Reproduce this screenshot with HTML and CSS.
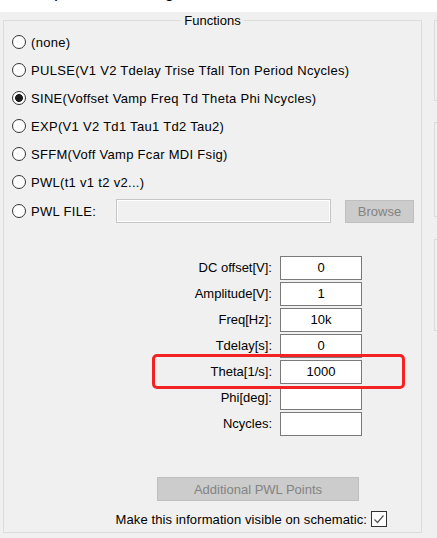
FILE: index.html
```html
<!DOCTYPE html>
<html lang="en">
<head>
    <meta charset="UTF-8">
    <meta name="viewport" content="width=device-width, initial-scale=1.0">
    <title>Independent Voltage Source</title>
    <link rel="stylesheet" href="styles.css">
</head>
<body>
    <!-- Window title, mostly scrolled out of view -->
    <div class="titlebar">
        <div class="title">Independent Voltage Source</div>
    </div>

    <div class="dialog">
        <fieldset class="functions">
            <legend>Functions</legend>

            <!-- Function type choices -->
            <div class="choices">
                <div class="choice"><span class="radio"></span>(none)</div>
                <div class="choice"><span class="radio"></span>PULSE(V1 V2 Tdelay Trise Tfall Ton Period Ncycles)</div>
                <div class="choice"><span class="radio checked"></span>SINE(Voffset Vamp Freq Td Theta Phi Ncycles)</div>
                <div class="choice"><span class="radio"></span>EXP(V1 V2 Td1 Tau1 Td2 Tau2)</div>
                <div class="choice"><span class="radio"></span>SFFM(Voff Vamp Fcar MDI Fsig)</div>
                <div class="choice"><span class="radio"></span>PWL(t1 v1 t2 v2...)</div>
                <div class="choice file-row">
                    <span class="radio"></span>
                    <span class="file-label">PWL FILE:</span>
                    <span class="file-input"></span>
                    <span class="btn browse">Browse</span>
                </div>
            </div>

            <!-- SINE parameters -->
            <div class="params">
                <span class="param-label">DC offset[V]:</span><span class="field">0</span>
                <span class="param-label">Amplitude[V]:</span><span class="field">1</span>
                <span class="param-label">Freq[Hz]:</span><span class="field">10k</span>
                <span class="param-label">Tdelay[s]:</span><span class="field">0</span>
                <span class="param-label">Theta[1/s]:</span><span class="field">1000</span>
                <span class="param-label">Phi[deg]:</span><span class="field"></span>
                <span class="param-label">Ncycles:</span><span class="field"></span>
                <div class="highlight"></div>
            </div>

            <div class="pwl-points">
                <span class="btn">Additional PWL Points</span>
            </div>

            <div class="visible-row">
                <span>Make this information visible on schematic:</span>
                <span class="checkbox">
                    <svg width="14" height="14" viewBox="0 0 14 14">
                        <path d="M2.5 7.5 L5.5 10.5 L11.5 3.5" fill="none" stroke="#555" stroke-width="1.2"/>
                    </svg>
                </span>
            </div>
        </fieldset>

        <!-- Neighbouring group boxes, cut off by the window edge -->
        <div class="side">
            <div class="side-box first"></div>
            <div class="side-box second"></div>
            <div class="side-box third"></div>
        </div>
    </div>
</body>
</html>
```

FILE: styles.css
```css
/* Base dialog look */
body {
    margin: 0;
    font-family: "Liberation Sans", Arial, sans-serif;
    font-size: 13px;
    color: #000;
    background-color: #f0f0f0;
    overflow: hidden;
}

/* White strip at the top with the cut-off title */
.titlebar {
    height: 12px;
    background-color: #fff;
    overflow: hidden;
}

.title {
    font-size: 18px;
    line-height: 18px;
    margin-top: -18px;
    padding-left: 19px;
    white-space: nowrap;
}

.dialog {
    display: flex;
    gap: 12px;
    padding-left: 3px;
}

/* Functions group box */
.functions {
    flex: none;
    width: 419px;
    height: 521px;
    box-sizing: border-box;
    margin: 0;
    padding: 0;
    min-width: 0;
    border: 1px solid #dcdcdc;
}

.functions legend {
    margin: 0 auto;
    padding: 1px 3px 0;
    line-height: 15px;
}

/* Radio rows */
.choices {
    display: flex;
    flex-direction: column;
    padding-left: 8px;
}

.choice {
    display: flex;
    align-items: center;
    gap: 5px;
    height: 28px;
    white-space: nowrap;
    letter-spacing: 0.3px;
}

.radio {
    width: 14px;
    height: 14px;
    flex: none;
    box-sizing: border-box;
    border: 1px solid #333;
    border-radius: 50%;
    background-color: #fff;
}

.radio.checked {
    background: radial-gradient(circle, #1c1c1c 0 3.6px, #fff 4.2px);
}

.file-row {
    height: 30px;
}

.file-label {
    flex: none;
    width: 80px;
}

.file-input {
    flex: none;
    width: 215px;
    height: 24px;
    box-sizing: border-box;
    border: 1px solid #c6c6c6;
    box-shadow: inset 0 0 0 1px #fff;
    background-color: #f0f0f0;
}

/* Disabled buttons */
.btn {
    display: flex;
    align-items: center;
    justify-content: center;
    box-sizing: border-box;
    background-color: #cccccc;
    border: 1px solid #bfbfbf;
    color: #838383;
    letter-spacing: 0;
}

.browse {
    flex: none;
    width: 69px;
    height: 23px;
    margin-left: 9px;
}

/* Parameter fields */
.params {
    position: relative;
    display: grid;
    grid-template-columns: 268px 82px;
    column-gap: 8px;
    row-gap: 2px;
    margin-top: 30px;
}

.param-label {
    text-align: right;
    line-height: 24px;
}

.field {
    height: 24px;
    box-sizing: border-box;
    border: 1px solid #7a7a7a;
    background-color: #fff;
    text-align: center;
    line-height: 22px;
}

/* Red marker around the Theta row */
.highlight {
    position: absolute;
    left: 148px;
    top: 98px;
    width: 253px;
    height: 35px;
    box-sizing: border-box;
    border: 3px solid #f42323;
    border-radius: 5px;
}

.pwl-points {
    margin-top: 41px;
    padding-left: 153px;
}

.pwl-points .btn {
    width: 202px;
    height: 24px;
}

.visible-row {
    display: flex;
    justify-content: flex-end;
    align-items: center;
    gap: 4px;
    height: 16px;
    margin-top: 10px;
    padding-right: 34px;
    letter-spacing: 0.1px;
}

.checkbox {
    display: flex;
    align-items: center;
    justify-content: center;
    width: 16px;
    height: 16px;
    box-sizing: border-box;
    border: 1px solid #333;
    background-color: #fff;
}

/* Group boxes on the right edge */
.side {
    flex: none;
    display: flex;
    flex-direction: column;
}

.side-box {
    width: 20px;
    box-sizing: border-box;
    border: 1px solid #dcdcdc;
}

.side-box.first {
    margin-top: 8px;
    height: 81px;
}

.side-box.second {
    margin-top: 21px;
    height: 95px;
}

.side-box.third {
    margin-top: 22px;
    height: 92px;
}
```
